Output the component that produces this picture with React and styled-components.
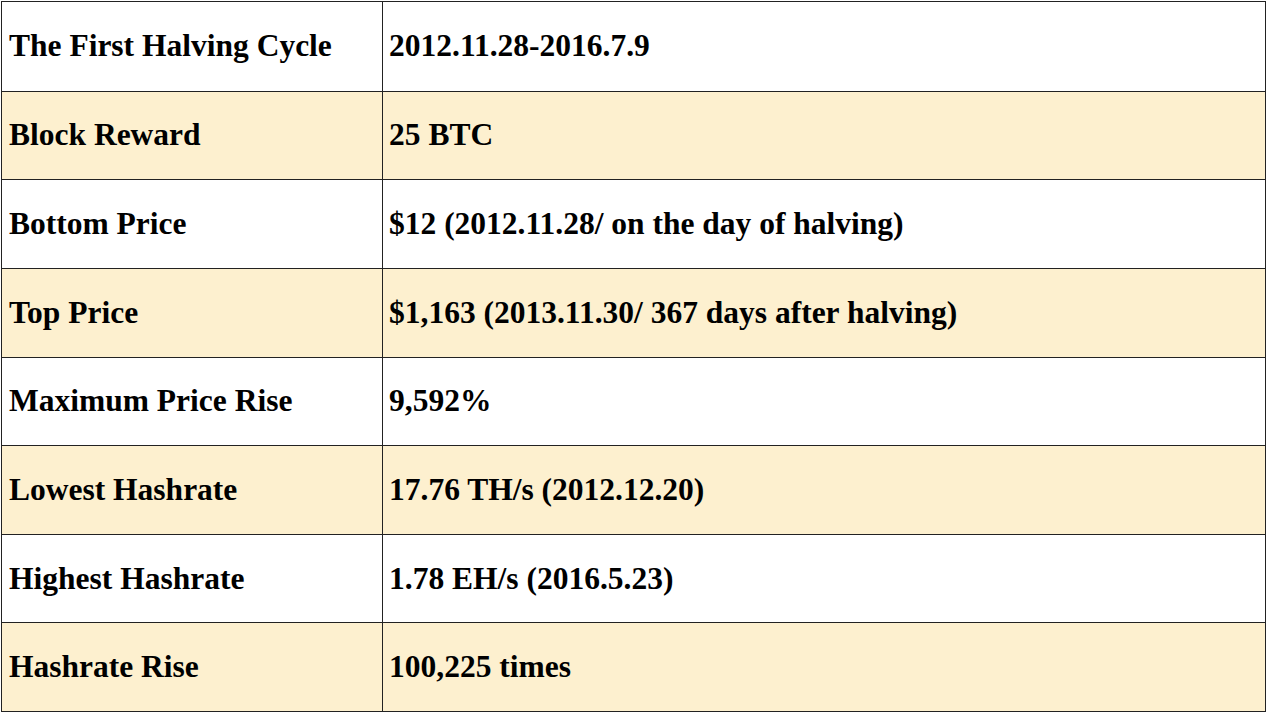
import styled, { createGlobalStyle } from "styled-components";

const GlobalStyle = createGlobalStyle`
  html, body {
    margin: 0;
    padding: 0;
    background: #fff;
  }
  body {
    font-family: "Liberation Serif", "Times New Roman", serif;
  }
`;

const Page = styled.div`
  width: 1269px;
  height: 715px;
  padding: 1px 0 0 1px;
  box-sizing: border-box;
  background: #fff;
`;

const Table = styled.div`
  width: 1265px;
  height: 711px;
  box-sizing: border-box;
  display: grid;
  grid-template-rows: repeat(8, 1fr);
  border: 1.5px solid #222;
`;

const Row = styled.div`
  display: grid;
  grid-template-columns: 380px 1fr;
  background: ${props => props.shaded ? "#fdf0cf" : "#fff"};
  border-top: ${props => props.first ? "none" : "1.5px solid #222"};
`;

const Cell = styled.div`
  display: flex;
  align-items: center;
  padding: 0 7px 0 ${props => props.divided ? "6px" : "7px"};
  font-size: 31.5px;
  font-weight: bold;
  color: #000;
  border-left: ${props => props.divided ? "1.5px solid #222" : "none"};
  white-space: nowrap;
`;

const rows = [
  ["The First Halving Cycle", "2012.11.28-2016.7.9"],
  ["Block Reward", "25 BTC"],
  ["Bottom Price", "$12 (2012.11.28/ on the day of halving)"],
  ["Top Price", "$1,163 (2013.11.30/ 367 days after halving)"],
  ["Maximum Price Rise", "9,592%"],
  ["Lowest Hashrate", "17.76 TH/s (2012.12.20)"],
  ["Highest Hashrate", "1.78 EH/s (2016.5.23)"],
  ["Hashrate Rise", "100,225 times"],
];

export default function App() {
  return (
    <Page>
      <GlobalStyle />
      <Table>
        {rows.map(([label, value], i) => (
          <Row key={label} shaded={i % 2 === 1} first={i === 0}>
            <Cell>{label}</Cell>
            <Cell divided>{value}</Cell>
          </Row>
        ))}
      </Table>
    </Page>
  );
}
